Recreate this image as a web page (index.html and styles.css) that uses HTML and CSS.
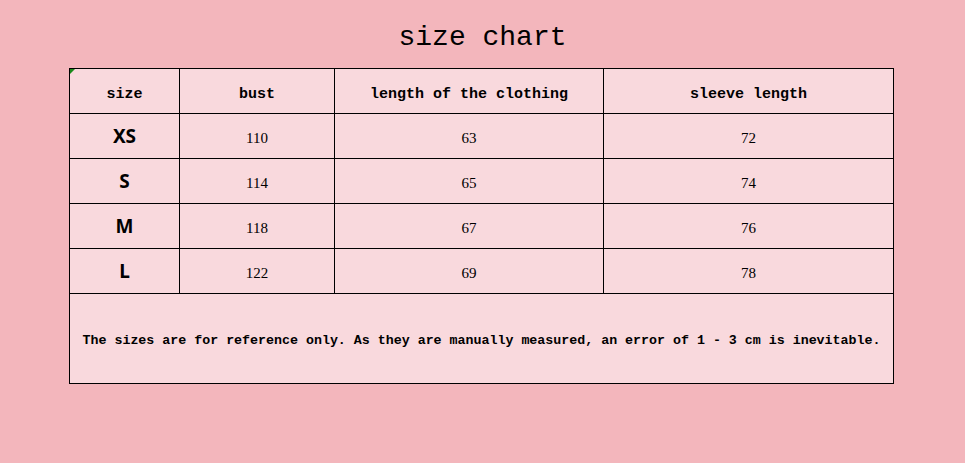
FILE: index.html
```html
<!DOCTYPE html>
<html>
<head>
<meta charset="utf-8">
<link rel="stylesheet" href="styles.css">
</head>
<body>
<h1 class="title">size chart</h1>
<div class="chart">
  <div class="cell head corner">size</div>
  <div class="cell head">bust</div>
  <div class="cell head">length of the clothing</div>
  <div class="cell head">sleeve length</div>

  <div class="cell size">XS</div>
  <div class="cell num">110</div>
  <div class="cell num">63</div>
  <div class="cell num">72</div>

  <div class="cell size">S</div>
  <div class="cell num">114</div>
  <div class="cell num">65</div>
  <div class="cell num">74</div>

  <div class="cell size">M</div>
  <div class="cell num">118</div>
  <div class="cell num">67</div>
  <div class="cell num">76</div>

  <div class="cell size">L</div>
  <div class="cell num">122</div>
  <div class="cell num">69</div>
  <div class="cell num">78</div>

  <div class="cell note">The sizes are for reference only. As they are manually measured, an error of 1 - 3 cm is inevitable.</div>
</div>
</body>
</html>
```
FILE: styles.css
```css
html, body {
  margin: 0;
  padding: 0;
}
body {
  background: #f3b6bc;
  width: 965px;
  height: 463px;
  overflow: hidden;
}
.title {
  margin: 0;
  padding-top: 22px;
  height: 32px;
  line-height: 32px;
  margin-bottom: 14px;
  text-align: center;
  font-family: "Liberation Mono", monospace;
  font-weight: normal;
  font-size: 28px;
  color: #000;
}
.chart {
  margin-left: 69px;
  width: 825px;
  box-sizing: border-box;
  display: grid;
  grid-template-columns: 109px 154px 268px 289px;
  grid-template-rows: 44px 44px 44px 44px 44px 89px;
  gap: 1px;
  padding: 1px;
  background: #000;
}
.cell {
  background: #f9d9dd;
  display: flex;
  align-items: center;
  justify-content: center;
  color: #000;
}
.head {
  font-family: "Liberation Mono", monospace;
  font-weight: bold;
  font-size: 15px;
  padding-top: 6px;
  box-sizing: border-box;
}
.corner {
  position: relative;
}
.corner::before {
  content: "";
  position: absolute;
  left: 0;
  top: 0;
  border-top: 5px solid #1a8a1a;
  border-right: 5px solid transparent;
}
.size {
  font-family: "Noto Sans", sans-serif;
  font-weight: bold;
  font-size: 19px;
}
.num {
  font-family: "Liberation Serif", serif;
  font-size: 15px;
  padding-top: 5px;
  box-sizing: border-box;
}
.note {
  grid-column: 1 / -1;
  font-family: "Liberation Mono", monospace;
  font-weight: bold;
  font-size: 13.3px;
  white-space: nowrap;
  padding-top: 3px;
  box-sizing: border-box;
}
```
